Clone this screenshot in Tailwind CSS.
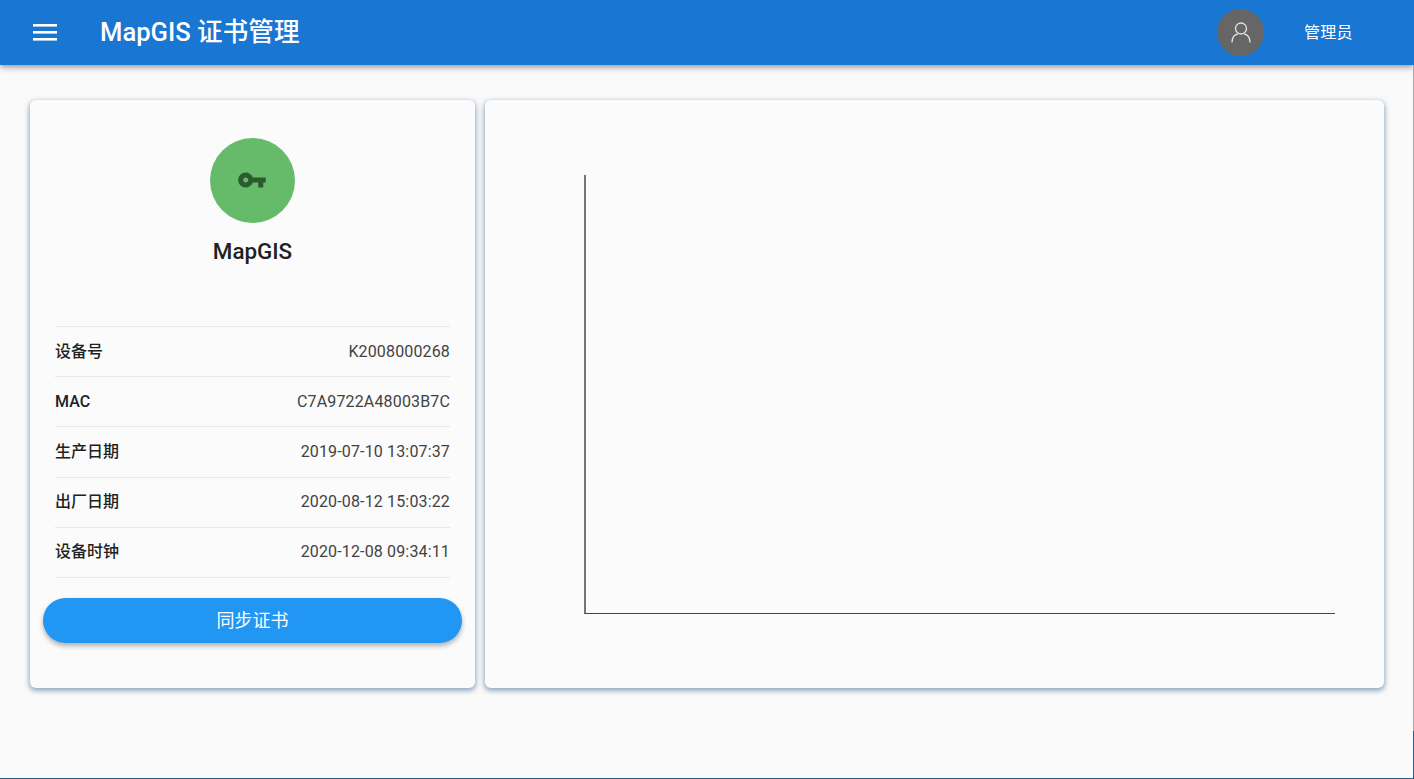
<!DOCTYPE html>
<html><head><meta charset="utf-8"><script src="https://cdn.jsdelivr.net/npm/@tailwindcss/browser@4"></script></head>
<body class="relative h-[779px] w-[1414px] overflow-hidden bg-[#fafafa] font-['Roboto','Noto_Sans_CJK_SC',sans-serif]">
<header class="relative z-10 flex h-[65px] items-center bg-[#1976d2] text-white shadow-[0_2px_4px_-1px_rgba(0,0,0,.2),0_4px_5px_0_rgba(0,0,0,.14),0_1px_10px_0_rgba(0,0,0,.12)]">
<svg class="ml-[33px] h-[17px] w-6" viewBox="0 0 24 17" fill="#fff"><rect y="0" width="24" height="2.6"/><rect y="7" width="24" height="2.6"/><rect y="14" width="24" height="2.6"/></svg>
<h1 class="ml-[43px] text-[25.6px] font-medium">MapGIS 证书管理</h1>
<div class="ml-auto flex h-[47px] w-[47px] items-center justify-center rounded-full bg-[#666666]">
<svg class="h-6 w-6" viewBox="0 0 24 24" fill="none" stroke="#e4e4e4" stroke-width="1.3"><circle cx="12" cy="7.5" r="5.5"/><path d="M3 21.5c0-5 2.500-8 6-8.700M21 21.500c0-5-2.500-8-6-8.700"/></svg></div>
<span class="ml-[40px] mr-[61px] w-[49px] text-base tracking-[.3px]">管理员</span>
</header>
<main class="flex gap-[10px] pl-[30px] pt-[35px]">
<section class="h-[588px] w-[445px] rounded-md bg-[#fbfbfb] shadow-[0_2px_5px_1px_rgba(50,90,140,.5)]">
<div class="flex flex-col items-center pt-[38px]">
<div class="flex h-[85px] w-[85px] items-center justify-center rounded-full bg-[#66bb6a]">
<svg class="h-[30px] w-[30px] -translate-x-px -translate-y-px" viewBox="0 0 24 24" fill="#2c5a2f"><path d="M12.65 10C11.83 7.67 9.61 6 7 6c-3.31 0-6 2.69-6 6s2.690 6 6 6c2.610 0 4.830-1.670 5.650-4H17v4h4v-4h2v-4H12.650zM7 14c-1.100 0-2-.9-2-2s.9-2 2-2 2 .9 2 2-.9 2-2 2z"/></svg></div>
<h2 class="mt-[15px] text-[22.4px] font-medium leading-[26px] text-[#212121]">MapGIS</h2>
</div>
<dl class="mx-[25px] mt-[62px] border-t border-[#e8e8e8] text-base">
<div class="flex h-[50.2px] items-center justify-between border-b border-[#e8e8e8]"><dt class="font-medium text-[#212121]">设备号</dt><dd class="tracking-[.15px] text-[#424242]">K2008000268</dd></div>
<div class="flex h-[50.2px] items-center justify-between border-b border-[#e8e8e8]"><dt class="font-medium text-[#212121]">MAC</dt><dd class="tracking-[.15px] text-[#424242]">C7A9722A48003B7C</dd></div>
<div class="flex h-[50.2px] items-center justify-between border-b border-[#e8e8e8]"><dt class="font-medium text-[#212121]">生产日期</dt><dd class="tracking-[.15px] text-[#424242]">2019-07-10 13:07:37</dd></div>
<div class="flex h-[50.2px] items-center justify-between border-b border-[#e8e8e8]"><dt class="font-medium text-[#212121]">出厂日期</dt><dd class="tracking-[.15px] text-[#424242]">2020-08-12 15:03:22</dd></div>
<div class="flex h-[50.2px] items-center justify-between border-b border-[#e8e8e8]"><dt class="font-medium text-[#212121]">设备时钟</dt><dd class="tracking-[.15px] text-[#424242]">2020-12-08 09:34:11</dd></div>
</dl>
<button class="mx-[13px] mt-5 h-[45px] w-[419px] rounded-full bg-[#2196f3] pt-[2px] text-lg text-white shadow-[0_3px_5px_rgba(0,0,0,.3)]">同步证书</button>
</section>
<section class="h-[588px] w-[899px] rounded-md bg-[#fbfbfb] pl-[99px] pt-[75px] shadow-[0_2px_5px_1px_rgba(50,90,140,.5)]">
<div class="h-[439px] w-[751px] border-b border-l-2 border-b-[#444] border-l-[#777]"></div>
</section>
</main>
<div class="absolute top-[65px] right-0 z-20 h-[666px] w-px bg-[#a8a8a8]"></div>
<div class="absolute top-[731px] right-0 z-20 h-12 w-px bg-[#2b5f8a]"></div>
<div class="absolute right-0 bottom-0 left-0 z-20 h-px bg-[#2b5f8a]"></div>
</body></html>
